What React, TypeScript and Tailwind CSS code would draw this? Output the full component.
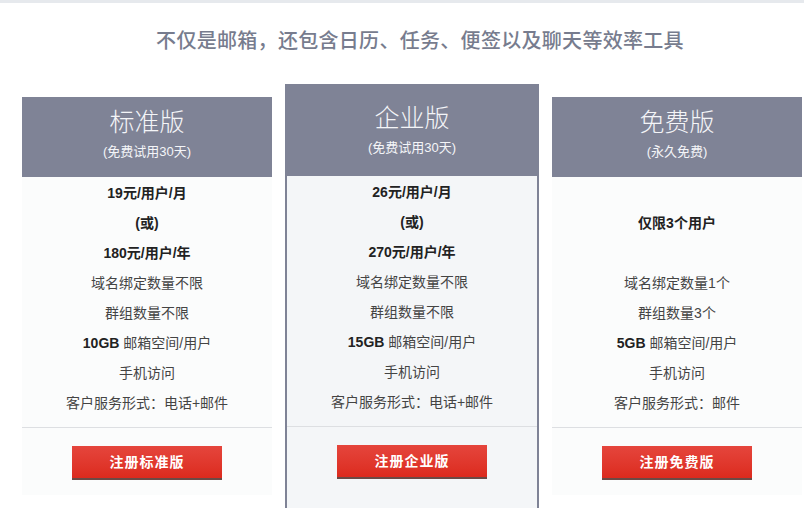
import React from "react";

type Line = { text: React.ReactNode; bold?: boolean } | null;

interface Plan {
  name: string;
  note: string;
  lines: Line[];
  button: string;
  featured?: boolean;
}

const gb = (n: string) => (
  <>
    <b className="font-bold text-[#222]">{n}</b> 邮箱空间/用户
  </>
);

const PLANS: Plan[] = [
  {
    name: "标准版",
    note: "(免费试用30天)",
    lines: [
      { text: "19元/用户/月", bold: true },
      { text: "(或)", bold: true },
      { text: "180元/用户/年", bold: true },
      { text: "域名绑定数量不限" },
      { text: "群组数量不限" },
      { text: gb("10GB") },
      { text: "手机访问" },
      { text: "客户服务形式：电话+邮件" },
    ],
    button: "注册标准版",
  },
  {
    name: "企业版",
    note: "(免费试用30天)",
    lines: [
      { text: "26元/用户/月", bold: true },
      { text: "(或)", bold: true },
      { text: "270元/用户/年", bold: true },
      { text: "域名绑定数量不限" },
      { text: "群组数量不限" },
      { text: gb("15GB") },
      { text: "手机访问" },
      { text: "客户服务形式：电话+邮件" },
    ],
    button: "注册企业版",
    featured: true,
  },
  {
    name: "免费版",
    note: "(永久免费)",
    lines: [
      null,
      { text: "仅限3个用户", bold: true },
      null,
      { text: "域名绑定数量1个" },
      { text: "群组数量3个" },
      { text: gb("5GB") },
      { text: "手机访问" },
      { text: "客户服务形式：邮件" },
    ],
    button: "注册免费版",
  },
];

function PlanCard({ plan }: { plan: Plan }) {
  const f = plan.featured;
  return (
    <div className={`flex flex-col ${f ? "w-[254px] mt-[-13px] mb-[-30px]" : "w-[250px]"}`}>
      <div
        className={`flex flex-col items-center bg-[#7f8396] text-[#f4f5f8] ${
          f ? "h-[92px] pt-[17px]" : "h-[80px] pt-[8px]"
        }`}
      >
        <div className="text-[25px] leading-[34px] font-light">{plan.name}</div>
        <div className="text-[13px] leading-[20px] mt-[3px]">{plan.note}</div>
      </div>
      <div
        className={`flex flex-1 flex-col ${
          f ? "bg-[#f4f6f8] border-x-2 border-[#7f8396]" : "bg-[#fbfcfc] pb-[15px]"
        }`}
      >
        <div className="flex flex-col pt-[1px]">
          {plan.lines.map((l, i) => (
            <div
              key={i}
              className={`h-[30px] leading-[30px] text-center text-[14px] ${
                l?.bold ? "font-bold text-[#222]" : "text-[#444]"
              }`}
            >
              {l ? l.text : "\u00a0"}
            </div>
          ))}
        </div>
        <div className="mt-[9px] border-t border-[#dddfe2]" />
        <div className="flex justify-center pt-[18px]">
          <button
            type="button"
            className="w-[150px] h-[34px] bg-gradient-to-b from-[#e5453c] to-[#dc2a1d] border-b-2 border-[#6b4a45] text-white text-[14px] font-bold tracking-[1px]"
          >
            {plan.button}
          </button>
        </div>
      </div>
    </div>
  );
}

export default function App() {
  return (
    <div
      className="h-[508px] overflow-hidden bg-white"
      style={{ fontFamily: '"Liberation Sans", Arial, "Noto Sans CJK SC", sans-serif' }}
    >
      <div className="h-[3px] bg-[#e6e9ed]" />
      <div className="pt-[26px] pl-[36px] text-center">
        <h1 className="text-[20px] leading-[24px] tracking-[0.3px] text-[#777c8e] font-medium">
          不仅是邮箱，还包含日历、任务、便签以及聊天等效率工具
        </h1>
      </div>
      <div className="flex gap-[13px] pl-[22px] pt-[44px]">
        {PLANS.map((p) => (
          <PlanCard key={p.name} plan={p} />
        ))}
      </div>
    </div>
  );
}
